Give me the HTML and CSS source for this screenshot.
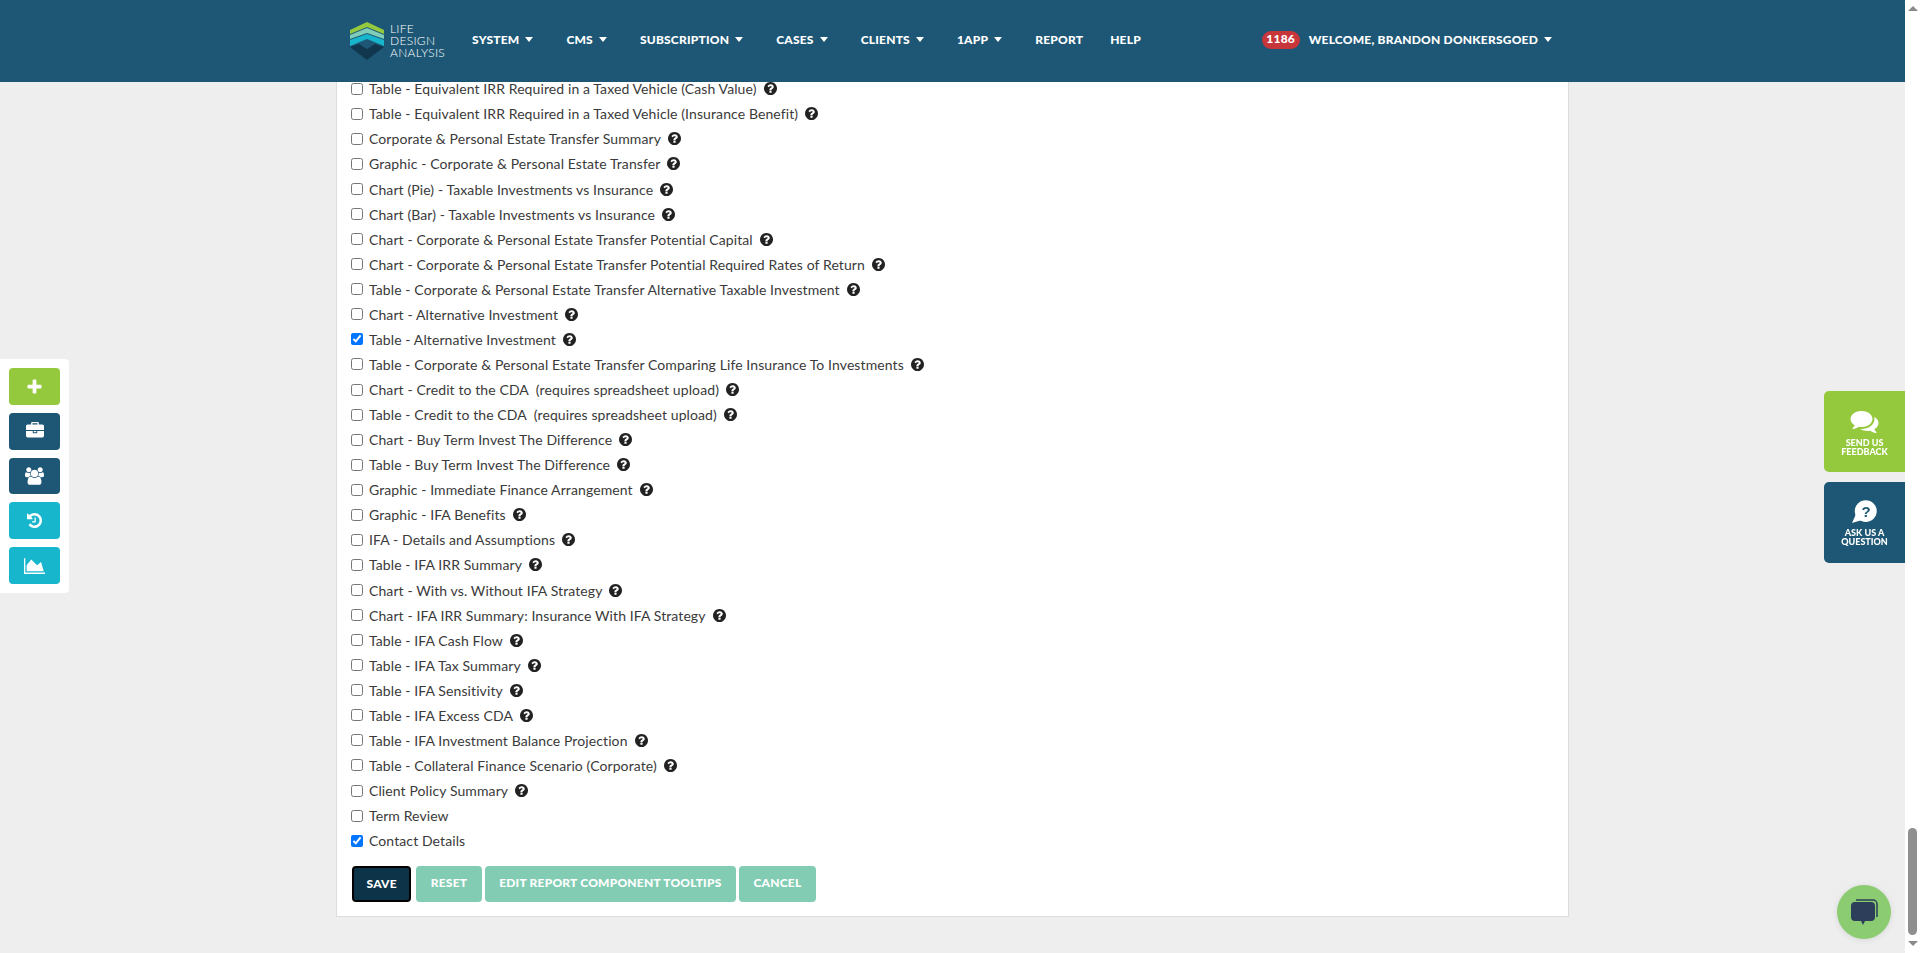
FILE: index.html

```html
<!DOCTYPE html>
<html lang="en">
<head>
    <meta charset="UTF-8">
    <title>Life Design Analysis - Report Components</title>
    <link rel="stylesheet" href="styles.css">
</head>
<body>
    <!-- icon set -->
    <svg class="icon-defs" xmlns="http://www.w3.org/2000/svg">
        <symbol id="i-help" viewBox="0 0 1536 1536">
            <path transform="translate(-128 -128)" d="M1024 1376v-192q0-14-9-23t-23-9h-192q-14 0-23 9t-9 23v192q0 14 9 23t23 9h192q14 0 23-9t9-23zm256-672q0-88-55.500-163t-138.500-116-170-41q-243 0-371 213-15 24 8 42l132 100q7 6 19 6 16 0 25-12 53-68 86-92 34-24 86-24 48 0 85.500 26t37.500 59q0 38-20 61t-68 45q-63 28-115.500 86.500t-52.500 125.500v36q0 14 9 23t23 9h192q14 0 23-9t9-23q0-19 21.500-49.500t54.500-49.500q32-18 49-28.500t46-35 44.500-48 28-60.500 12.500-81zm384 192q0 209-103 385.500t-279.500 279.500-385.500 103-385.500-103-279.500-279.500-103-385.500 103-385.500 279.500-279.500 385.500-103 385.500 103 279.500 279.500 103 385.500z"/>
        </symbol>
    </svg>

    <div class="page">
        <header class="topbar">
            <a class="logo" href="#">
                <svg class="logo-mark" viewBox="0 0 34 38" width="34" height="38">
                    <polygon fill="#95c93d" points="17,0 34,8 34,12 17,5 0,12 0,8"/>
                    <polygon fill="#7fcdb8" points="17,6 34,13 34,17 17,11 0,17 0,13"/>
                    <polygon fill="#17b6cd" points="17,12 34,18 34,24 17,17 0,24 0,18"/>
                    <polygon fill="#11374f" points="0,25 9,22 17,27 25,22 34,25 17,38"/>
                </svg>
                <span class="logo-text">
                    <span>LIFE</span>
                    <span>DESIGN</span>
                    <span>ANALYSIS</span>
                </span>
            </a>
            <nav class="main-nav">
                <a class="has-caret" href="#">System</a>
                <a class="has-caret" href="#">CMS</a>
                <a class="has-caret" href="#">Subscription</a>
                <a class="has-caret" href="#">Cases</a>
                <a class="has-caret" href="#">Clients</a>
                <a class="has-caret" href="#">1App</a>
                <a href="#">Report</a>
                <a href="#">Help</a>
            </nav>
            <div class="user-nav">
                <span class="badge">1186</span>
                <a class="has-caret" href="#">Welcome, Brandon Donkersgoed</a>
            </div>
        </header>

        <main class="panel">
            <form class="component-form">
                <label class="row"><input type="checkbox"><span>Table - Equivalent IRR Required in a Taxed Vehicle (Cash Value)</span><svg class="help"><use href="#i-help"/></svg></label>
                <label class="row"><input type="checkbox"><span>Table - Equivalent IRR Required in a Taxed Vehicle (Insurance Benefit)</span><svg class="help"><use href="#i-help"/></svg></label>
                <label class="row"><input type="checkbox"><span>Corporate &amp; Personal Estate Transfer Summary</span><svg class="help"><use href="#i-help"/></svg></label>
                <label class="row"><input type="checkbox"><span>Graphic - Corporate &amp; Personal Estate Transfer</span><svg class="help"><use href="#i-help"/></svg></label>
                <label class="row"><input type="checkbox"><span>Chart (Pie) - Taxable Investments vs Insurance</span><svg class="help"><use href="#i-help"/></svg></label>
                <label class="row"><input type="checkbox"><span>Chart (Bar) - Taxable Investments vs Insurance</span><svg class="help"><use href="#i-help"/></svg></label>
                <label class="row"><input type="checkbox"><span>Chart - Corporate &amp; Personal Estate Transfer Potential Capital</span><svg class="help"><use href="#i-help"/></svg></label>
                <label class="row"><input type="checkbox"><span>Chart - Corporate &amp; Personal Estate Transfer Potential Required Rates of Return</span><svg class="help"><use href="#i-help"/></svg></label>
                <label class="row"><input type="checkbox"><span>Table - Corporate &amp; Personal Estate Transfer Alternative Taxable Investment</span><svg class="help"><use href="#i-help"/></svg></label>
                <label class="row"><input type="checkbox"><span>Chart - Alternative Investment</span><svg class="help"><use href="#i-help"/></svg></label>
                <label class="row"><input type="checkbox" checked><span>Table - Alternative Investment</span><svg class="help"><use href="#i-help"/></svg></label>
                <label class="row"><input type="checkbox"><span>Table - Corporate &amp; Personal Estate Transfer Comparing Life Insurance To Investments</span><svg class="help"><use href="#i-help"/></svg></label>
                <label class="row"><input type="checkbox"><span>Chart - Credit to the CDA &nbsp;(requires spreadsheet upload)</span><svg class="help"><use href="#i-help"/></svg></label>
                <label class="row"><input type="checkbox"><span>Table - Credit to the CDA &nbsp;(requires spreadsheet upload)</span><svg class="help"><use href="#i-help"/></svg></label>
                <label class="row"><input type="checkbox"><span>Chart - Buy Term Invest The Difference</span><svg class="help"><use href="#i-help"/></svg></label>
                <label class="row"><input type="checkbox"><span>Table - Buy Term Invest The Difference</span><svg class="help"><use href="#i-help"/></svg></label>
                <label class="row"><input type="checkbox"><span>Graphic - Immediate Finance Arrangement</span><svg class="help"><use href="#i-help"/></svg></label>
                <label class="row"><input type="checkbox"><span>Graphic - IFA Benefits</span><svg class="help"><use href="#i-help"/></svg></label>
                <label class="row"><input type="checkbox"><span>IFA - Details and Assumptions</span><svg class="help"><use href="#i-help"/></svg></label>
                <label class="row"><input type="checkbox"><span>Table - IFA IRR Summary</span><svg class="help"><use href="#i-help"/></svg></label>
                <label class="row"><input type="checkbox"><span>Chart - With vs. Without IFA Strategy</span><svg class="help"><use href="#i-help"/></svg></label>
                <label class="row"><input type="checkbox"><span>Chart - IFA IRR Summary: Insurance With IFA Strategy</span><svg class="help"><use href="#i-help"/></svg></label>
                <label class="row"><input type="checkbox"><span>Table - IFA Cash Flow</span><svg class="help"><use href="#i-help"/></svg></label>
                <label class="row"><input type="checkbox"><span>Table - IFA Tax Summary</span><svg class="help"><use href="#i-help"/></svg></label>
                <label class="row"><input type="checkbox"><span>Table - IFA Sensitivity</span><svg class="help"><use href="#i-help"/></svg></label>
                <label class="row"><input type="checkbox"><span>Table - IFA Excess CDA</span><svg class="help"><use href="#i-help"/></svg></label>
                <label class="row"><input type="checkbox"><span>Table - IFA Investment Balance Projection</span><svg class="help"><use href="#i-help"/></svg></label>
                <label class="row"><input type="checkbox"><span>Table - Collateral Finance Scenario (Corporate)</span><svg class="help"><use href="#i-help"/></svg></label>
                <label class="row"><input type="checkbox"><span>Client Policy Summary</span><svg class="help"><use href="#i-help"/></svg></label>
                <label class="row"><input type="checkbox"><span>Term Review</span></label>
                <label class="row"><input type="checkbox" checked><span>Contact Details</span></label>

                <div class="form-actions">
                    <button type="button" class="btn btn-save">Save</button>
                    <button type="button" class="btn">Reset</button>
                    <button type="button" class="btn">Edit Report Component Tooltips</button>
                    <button type="button" class="btn">Cancel</button>
                </div>
            </form>
        </main>

        <div class="quick-tools">
            <a class="tool tool-green" href="#">
                <svg viewBox="0 0 16 16" width="15" height="15"><path fill="#fff" d="M6 1.500a1 1 0 0 1 1-1h2a1 1 0 0 1 1 1V6h4.500a1 1 0 0 1 1 1v2a1 1 0 0 1-1 1H10v4.500a1 1 0 0 1-1 1H7a1 1 0 0 1-1-1V10H1.500a1 1 0 0 1-1-1V7a1 1 0 0 1 1-1H6z"/></svg>
            </a>
            <a class="tool tool-navy" href="#">
                <svg viewBox="0 0 1792 1792" width="18" height="18"><path fill="#fff" d="M640 256h512v-128h-512v128zm1152 640v480q0 66-47 113t-113 47h-1472q-66 0-113-47t-47-113v-480h672v160q0 26 19 45t45 19h320q26 0 45-19t19-45v-160h672zm-768 0v128h-256v-128h256zm768-480v384h-1792v-384q0-66 47-113t113-47h352v-160q0-40 28-68t68-28h576q40 0 68 28t28 68v160h352q66 0 113 47t47 113z"/></svg>
            </a>
            <a class="tool tool-navy" href="#">
                <svg viewBox="0 0 1920 1792" width="19" height="18"><path fill="#fff" d="M593 896q-162 5-265 128h-134q-82 0-138-40.500t-56-118.500q0-353 124-353 6 0 43.500 21t97.500 42.500 119 21.500q67 0 133-23-5 37-5 66 0 139 81 256zm1071 637q0 120-73 189.500t-194 69.500h-874q-121 0-194-69.500t-73-189.500q0-53 3.500-103.500t14-109 26.500-108.500 43-97.500 62-81 85.500-53.500 111.500-20q10 0 43 21.500t73 48 107 48 135 21.500 135-21.500 107-48 73-48 43-21.500q61 0 111.500 20t85.500 53.500 62 81 43 97.500 26.500 108.500 14 109 3.500 103.500zm-1024-1277q0 106-75 181t-181 75-181-75-75-181 75-181 181-75 181 75 75 181zm704 384q0 159-112.500 271.500t-271.500 112.500-271.500-112.500-112.500-271.500 112.500-271.500 271.500-112.500 271.500 112.500 112.500 271.500zm576 225q0 78-56 118.500t-138 40.500h-134q-103-123-265-128 81-117 81-256 0-29-5-66 66 23 133 23 59 0 119-21.500t97.500-42.500 43.500-21q124 0 124 353zm-128-609q0 106-75 181t-181 75-181-75-75-181 75-181 181-75 181 75 75 181z"/></svg>
            </a>
            <a class="tool tool-teal" href="#">
                <svg viewBox="128 128 1536 1536" width="15" height="15"><path fill="#fff" d="M1664 896q0 156-61 298t-164 245-245 164-298 61q-172 0-327-72.500t-264-204.500q-7-10-6.500-22.500t8.500-20.500l137-138q10-9 25-9 16 2 23 12 73 95 179 147t225 52q104 0 198.500-40.500t163.500-109.500 109.500-163.500 40.500-198.500-40.500-198.500-109.500-163.500-163.500-109.500-198.500-40.500q-98 0-188 35.500t-160 101.500l137 138q31 30 14 69-17 40-59 40h-448q-26 0-45-19t-19-45v-448q0-42 40-59 39-17 69 14l130 129q107-101 244.500-156.500t284.500-55.500q156 0 298 61t245 164 164 245 61 298zm-640-288v448q0 14-9 23t-23 9h-320q-14 0-23-9t-9-23v-64q0-14 9-23t23-9h224v-352q0-14 9-23t23-9h64q14 0 23 9t9 23z"/></svg>
            </a>
            <a class="tool tool-teal" href="#">
                <svg viewBox="0 128 2048 1536" width="21" height="16"><path fill="#fff" d="M2048 1536v128h-2048v-1536h128v1408h1920zm-384-1024l256 896h-1664v-576l448-576 576 576z"/></svg>
            </a>
        </div>

        <div class="side-tabs">
            <a class="side-tab side-tab-green" href="#">
                <svg viewBox="0 128 1792 1536" width="29" height="24"><path fill="#fff" d="M1408 768q0 139-94 257t-256.500 186.500-353.500 68.500q-86 0-176-16-124 88-278 128-36 9-86 16h-3q-11 0-20.500-8t-11.500-21q-1-3-1-6.500t.5-6.500 2-6l2.500-5 3.500-5.500 4-5 4.500-5 4-4.500q5-6 23-25t26-29.500 22.500-29 25-38.500 20.500-44q-124-72-195-177t-71-224q0-139 94-257t256.500-186.500 353.500-68.500 353.500 68.500 256.500 186.500 94 257zm384 256q0 120-71 224.500t-195 176.500q10 24 20.500 44t25 38.500 22.500 29 26 29.500 23 25q1 1 4 4.500t4.500 5 4 5 3.500 5.500l2.500 5 2 6 .5 6.500-1 6.500q-3 14-13 22t-22 7q-50-7-86-16-154-40-278-128-90 16-176 16-271 0-472-132 58 4 88 4 161 0 309-45t264-129q125-92 192-212t67-254q0-77-23-152 129 71 204 178t75 230z"/></svg>
                <span>Send us feedback</span>
            </a>
            <a class="side-tab side-tab-navy" href="#">
                <svg viewBox="0 0 26 23" width="26" height="23">
                    <circle cx="14" cy="10" r="10" fill="#fff" transform="scale(1.1 1.08) translate(-1.500 0.300)"/>
                    <polygon fill="#fff" points="0,23 4,14 10,20"/>
                    <text class="bubble-mark" x="14" y="16.500" text-anchor="middle">?</text>
                </svg>
                <span>Ask us a question</span>
            </a>
        </div>

        <a class="chat-widget" href="#">
            <svg viewBox="0 0 28 27" width="28" height="27">
                <path fill="none" stroke="#2c3e5a" stroke-width="1.500" d="M6 1h17a4 4 0 0 1 4 4v13"/>
                <path fill="#2c3e5a" d="M5 3h16a4 4 0 0 1 4 4v11a4 4 0 0 1-4 4h-6l-2 4-2-4H5a4 4 0 0 1-4-4V7a4 4 0 0 1 4-4z"/>
            </svg>
        </a>
    </div>

    <div class="scrollbar">
        <span class="arrow-up"></span>
        <span class="thumb"></span>
        <span class="arrow-down"></span>
    </div>
</body>
</html>
```

FILE: styles.css

```css
* {
    box-sizing: border-box;
}
body {
    font-family: Lato, "Liberation Sans", sans-serif;
    font-size: 14px;
    letter-spacing: 0.1px;
    color: #3a3a3a;
    margin: 0;
    height: 100vh;
    overflow: hidden;
    display: flex;
    background-color: #eeeeee;
}
a {
    text-decoration: none;
}
.icon-defs {
    display: none;
}
.page {
    flex: 1;
    display: flex;
    justify-content: center;
    align-items: flex-start;
}

/* top bar */
.topbar {
    position: fixed;
    top: 0;
    left: 0;
    right: 15px;
    height: 82px;
    z-index: 10;
    display: flex;
    align-items: center;
    padding: 0 353px 3px 350px;
    background-color: #1d5775;
    color: #fff;
    font-weight: 900;
    font-size: 12px;
    letter-spacing: 0.2px;
    text-transform: uppercase;
}
.topbar a {
    color: #fff;
}
.logo {
    display: flex;
    align-items: center;
    gap: 6px;
    margin-right: 27px;
    margin-top: 3px;
}
.logo-text {
    display: flex;
    flex-direction: column;
    font-weight: 300;
    font-size: 12px;
    line-height: 12px;
    letter-spacing: 0.3px;
}
.main-nav {
    display: flex;
    gap: 27px;
    flex: 1;
}
.has-caret::after {
    content: "";
    display: inline-block;
    margin-left: 6px;
    margin-right: 6px;
    vertical-align: 2px;
    border-left: 4.5px solid transparent;
    border-right: 4.5px solid transparent;
    border-top: 5px solid #fff;
}
.user-nav {
    display: flex;
    align-items: center;
    gap: 9px;
}
.user-nav .has-caret::after {
    margin-right: 0;
}
.badge {
    background-color: #c7363a;
    border-radius: 9px;
    width: 38px;
    height: 18px;
    line-height: 15px;
    text-align: center;
    font-size: 12px;
}

/* report component list */
.panel {
    width: 1233px;
    height: 917px;
    padding: 76.25px 15px 0;
    background-color: #fff;
    border: 1px solid #dddddd;
    border-top: none;
}
.row {
    display: flex;
    align-items: center;
    height: 25.07px;
}
.row input {
    width: 12px;
    height: 12px;
    margin: 0 6px 0 -1px;
}
.help {
    width: 13px;
    height: 13px;
    margin-left: 7px;
    fill: #222;
}
.form-actions {
    display: flex;
    gap: 3px;
    margin-top: 13px;
}
.btn {
    height: 36px;
    padding: 0 14.5px 4px;
    font-family: inherit;
    font-size: 12px;
    font-weight: 900;
    letter-spacing: 0.2px;
    text-transform: uppercase;
    color: #fff;
    background-color: #82ccb3;
    border: none;
    border-radius: 4px;
    cursor: pointer;
}
.btn-save {
    background-color: #0d3349;
    border: 2px solid #000;
    padding: 0 12.5px 2px;
    margin-right: 2px;
}

/* left floating buttons */
.quick-tools {
    position: fixed;
    left: 0;
    top: 359px;
    width: 69px;
    height: 234px;
    padding: 9px;
    display: flex;
    flex-direction: column;
    gap: 8px;
    background-color: #fff;
    border-radius: 0 4px 4px 0;
}
.tool {
    height: 37px;
    display: flex;
    align-items: center;
    justify-content: center;
    border-radius: 4px;
}
.tool-green {
    background-color: #95c93d;
}
.tool-navy {
    background-color: #1d5775;
}
.tool-teal {
    background-color: #17b6cd;
}

/* right floating tabs */
.side-tabs {
    position: fixed;
    right: 15px;
    top: 391px;
    width: 81px;
    display: flex;
    flex-direction: column;
    gap: 10px;
}
.side-tab {
    height: 81px;
    display: flex;
    flex-direction: column;
    align-items: center;
    padding-top: 18px;
    border-radius: 5px 0 0 5px;
    color: #fff;
    font-size: 9px;
    font-weight: 900;
    line-height: 9px;
    letter-spacing: 0;
    text-align: center;
    text-transform: uppercase;
}
.side-tab span {
    width: 60px;
    margin-top: 5px;
}
.side-tab-green {
    background-color: #95c93d;
}
.side-tab-navy {
    background-color: #1d5775;
}
.bubble-mark {
    font-family: "Liberation Sans", sans-serif;
    font-size: 15px;
    font-weight: 700;
    fill: #1d5775;
}

/* chat button */
.chat-widget {
    position: fixed;
    left: 1837px;
    top: 885px;
    width: 54px;
    height: 54px;
    display: flex;
    align-items: center;
    justify-content: center;
    border-radius: 50%;
    background-color: #8bcb72;
    box-shadow: 0 1px 6px rgba(0,0,0,0.1);
}

/* scrollbar at the bottom of its track */
.scrollbar {
    width: 15px;
    background-color: #fff;
    display: flex;
    flex-direction: column;
    align-items: center;
}
.arrow-up {
    margin-top: 6px;
    margin-bottom: auto;
    border-left: 5px solid transparent;
    border-right: 5px solid transparent;
    border-bottom: 5px solid #8a8a8a;
}
.thumb {
    width: 9px;
    height: 107px;
    background-color: #8f8f8f;
    border-radius: 5px;
}
.arrow-down {
    margin-top: 6px;
    margin-bottom: 7px;
    border-left: 5px solid transparent;
    border-right: 5px solid transparent;
    border-top: 5px solid #8a8a8a;
}
```
